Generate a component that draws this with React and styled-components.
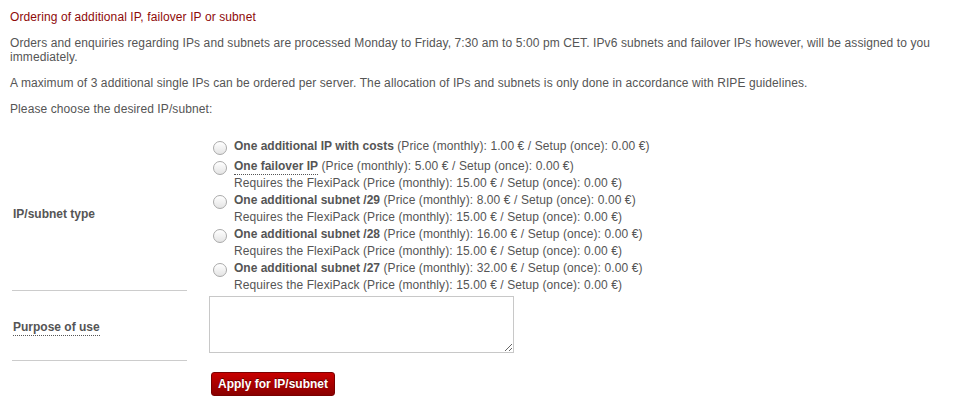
import styled, { createGlobalStyle } from "styled-components"

const GlobalStyle = createGlobalStyle`
  body {
    margin: 0;
    background: #fff;
    font-family: "Liberation Sans", Arial, Helvetica, sans-serif;
    font-size: 12px;
    letter-spacing: 0.1px;
    color: #555;
  }
`

const Page = styled.div`
  padding: 10px 10px 20px 10px;
`

const Title = styled.h2`
  margin: 0 0 12px 0;
  font-size: 12px;
  font-weight: normal;
  line-height: 14px;
  color: #8e0a0a;
`

const Para = styled.p`
  margin: 0 0 12px 0;
  line-height: 14px;
`

const Form = styled.div`
  display: grid;
  grid-template-columns: 175px 1fr;
  column-gap: 22px;
  margin: 21px 0 0 2px;
`

// height + top padding + 1px border = row height
const LabelCell = styled.div`
  display: flex;
  align-items: center;
  padding: ${(p) => p.pt || 0}px 0 0 1px;
  height: ${(p) => p.h}px;
  border-bottom: ${(p) => (p.line ? "1px solid #ccc" : "none")};
  font-weight: bold;
  letter-spacing: 0;
`

const Dotted = styled.span`
  border-bottom: 1px dotted #555;
  padding-bottom: 1px;
`

const Options = styled.div`
  padding: 1px 0 0 4px;
  box-sizing: border-box;
  height: ${(p) => p.h}px;
`

const Option = styled.label`
  display: flex;
  align-items: flex-start;
  gap: 7px;
  line-height: 17px;
`

const Radio = styled.input`
  appearance: none;
  flex: none;
  width: 14px;
  height: 14px;
  margin: 3px 0;
  border-radius: 50%;
  border: 1px solid #a9a9a9;
  background: linear-gradient(#ffffff, #e4e4e4);
  box-shadow: inset 0 1px 1px rgba(255, 255, 255, 0.8);
`

const Name = styled.b`
  font-weight: bold;
  letter-spacing: 0;
`

const InputCell = styled.div`
  padding-top: 5px;
`

const Area = styled.textarea`
  display: block;
  width: 305px;
  height: 57px;
  box-sizing: border-box;
  border: 1px solid #c8c8c8;
  margin: 0;
`

const ButtonCell = styled.div`
  padding: 11px 0 0 2px;
`

const Button = styled.button`
  height: 24px;
  padding: 0 6px;
  border: 1px solid #7a0000;
  border-radius: 3px;
  background: linear-gradient(#c80000, #8a0000);
  color: #fff;
  font-family: "Liberation Sans", Arial, sans-serif;
  font-size: 12px;
  font-weight: bold;
  text-shadow: 0 -1px 0 rgba(0, 0, 0, 0.5);
  cursor: pointer;
`

const flexi = "Requires the FlexiPack (Price (monthly): 15.00 € / Setup (once): 0.00 €)"

const options = [
  { name: "One additional IP with costs", price: "1.00" },
  { name: "One failover IP", price: "5.00", dotted: true, extra: flexi },
  { name: "One additional subnet /29", price: "8.00", extra: flexi },
  { name: "One additional subnet /28", price: "16.00", extra: flexi },
  { name: "One additional subnet /27", price: "32.00", extra: flexi },
]

export default function App() {
  return (
    <Page>
      <GlobalStyle />
      <Title>Ordering of additional IP, failover IP or subnet</Title>
      <Para>
        Orders and enquiries regarding IPs and subnets are processed Monday to Friday, 7:30 am to 5:00 pm CET. IPv6
        subnets and failover IPs however, will be assigned to you immediately.
      </Para>
      <Para>
        A maximum of 3 additional single IPs can be ordered per server. The allocation of IPs and subnets is only done
        in accordance with RIPE guidelines.
      </Para>
      <Para>Please choose the desired IP/subnet:</Para>
      <Form>
        <LabelCell h={153} line>IP/subnet type</LabelCell>
        <Options h={154}>
          {options.map((o) => (
            <Option key={o.name}>
              <Radio type="radio" name="iptype" />
              <span>
                <Name>{o.dotted ? <Dotted>{o.name}</Dotted> : o.name}</Name> (Price (monthly): {o.price} € / Setup
                (once): 0.00 €)
                {o.extra && (
                  <>
                    <br />
                    {o.extra}
                  </>
                )}
              </span>
            </Option>
          ))}
        </Options>
        <LabelCell h={65} pt={4} line>
          <Dotted>Purpose of use</Dotted>
        </LabelCell>
        <InputCell>
          <Area />
        </InputCell>
        <div />
        <ButtonCell>
          <Button>Apply for IP/subnet</Button>
        </ButtonCell>
      </Form>
    </Page>
  )
}
